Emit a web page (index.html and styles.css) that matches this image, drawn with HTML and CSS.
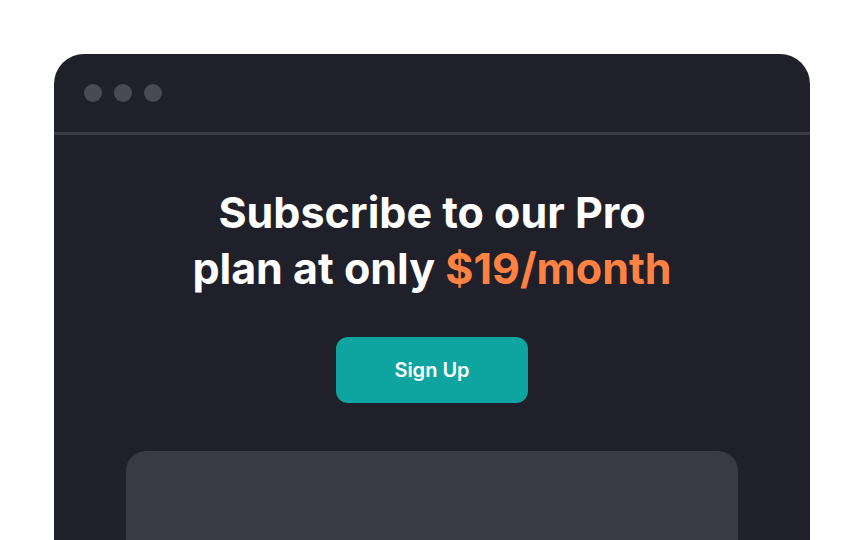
FILE: index.html
```html
<!DOCTYPE html>
<html>
<head>
<meta charset="utf-8">
<link rel="stylesheet" href="styles.css">
</head>
<body>
<div class="window">
  <div class="titlebar">
    <span class="dot"></span><span class="dot"></span><span class="dot"></span>
  </div>
  <div class="content">
    <h1 class="headline">Subscribe to our Pro<br>plan at only <span class="price">$19/month</span></h1>
    <button class="cta">Sign Up</button>
    <div class="preview"></div>
  </div>
</div>
</body>
</html>
```
FILE: styles.css
```css
html, body {
  margin: 0;
  height: 540px;
  overflow: hidden;
  background: #ffffff;
}
body {
  padding: 54px 54px 0 54px;
  box-sizing: border-box;
  font-family: Inter, "Noto Sans", sans-serif;
}
.window {
  width: 756px;
  height: 486px;
  background: #20202a;
  border-radius: 30px 30px 0 0;
  overflow: hidden;
}
.titlebar {
  height: 78px;
  display: flex;
  align-items: center;
  gap: 12px;
  padding-left: 30px;
  border-bottom: 3px solid #3a3a44;
}
.dot {
  width: 18px;
  height: 18px;
  border-radius: 50%;
  background: #4a4a55;
}
.content {
  display: flex;
  flex-direction: column;
  align-items: center;
  padding-top: 49px;
}
.headline {
  margin: 0;
  color: #ffffff;
  font-size: 43px;
  line-height: 56px;
  font-weight: 700;
  text-align: center;
  letter-spacing: 0;
}
.price {
  color: #ff8243;
}
.cta {
  margin-top: 41px;
  width: 192px;
  height: 66px;
  border: none;
  border-radius: 12px;
  background: #0ea5a0;
  color: #ffffff;
  font-family: Inter, sans-serif;
  font-size: 20px;
  font-weight: 600;
}
.preview {
  margin-top: 48px;
  width: 612px;
  height: 89px;
  background: #3a3a44;
  border-radius: 20px 20px 0 0;
}
```
